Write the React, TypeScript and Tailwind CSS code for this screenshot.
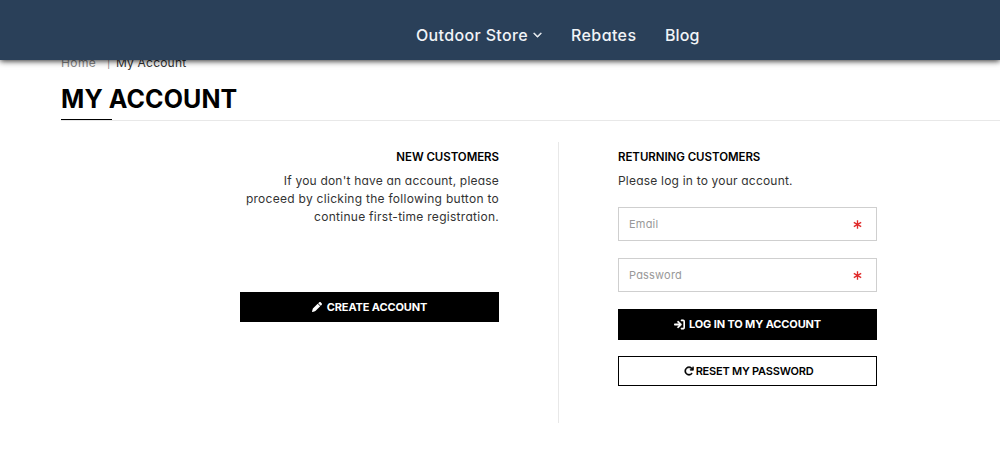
import React from 'react';
import { FaArrowRightToBracket, FaArrowRotateRight, FaChevronDown, FaPen } from 'react-icons/fa6';

interface FieldProps {
  type: string;
  placeholder: string;
}

const RequiredMark: React.FC = () => (
  <svg viewBox="0 0 10 10" className="w-[9px] h-[9px] mt-px" fill="none" stroke="#e02a2a" strokeWidth="1.5">
    <path d="M5 0.3v9.4M0.9 2.7l8.2 4.6M9.1 2.7L0.9 7.3" />
  </svg>
);

const Field: React.FC<FieldProps> = ({ type, placeholder }) => (
  <label className="flex items-center h-[34px] border border-[#cfcfcf] pl-[10px] pr-[14px]">
    <input
      type={type}
      placeholder={placeholder}
      className="flex-1 min-w-0 text-[11px] tracking-[0.2px] outline-none placeholder:text-[#999]"
    />
    <RequiredMark />
  </label>
);

const Header: React.FC = () => (
  <header className="relative z-10 h-[60px] bg-[#2a4059] shadow-[0_1px_6px_rgba(0,0,0,0.85)]">
    <nav className="flex items-center h-full pl-[416px] pt-[9px] text-base font-medium text-[#f1f4f7]">
      <a className="flex items-center w-[155px]">
        <span className="tracking-[0.35px]">Outdoor Store</span>
        <FaChevronDown className="w-[9px] h-[9px] ml-[5px]" stroke="currentColor" strokeWidth="24" />
      </a>
      <a className="w-[94px] tracking-[0.4px]">Rebates</a>
      <a className="tracking-[0.1px]">Blog</a>
    </nav>
  </header>
);

export default function App() {
  return (
    <div className="h-[462px] overflow-hidden bg-white text-black font-['Inter','Open_Sans',sans-serif] [font-feature-settings:'cv11'] whitespace-nowrap">
      <Header />
      <main className="pl-[61px]">
        <div className="flex h-[18px] -mt-[6px] text-xs leading-[18px] text-[#333]">
          <span className="w-[46px] text-[#888] tracking-[0.4px]">Home</span>
          <span className="w-[9px] text-[#888] text-[10px]">|</span>
          <span className="tracking-[0.2px]">My Account</span>
        </div>
        <div className="h-[49px] border-b border-[#e8e8e8]">
          <h1 className="w-[51px] h-[48px] pt-[13px] border-b border-black text-[25px] leading-[28px] font-bold tracking-[0.1px]">MY ACCOUNT</h1>
        </div>

        <div className="flex mt-[21px] h-[281px]">
          <section className="w-[498px] pl-[179px] pr-[59px] border-r border-[#e8e8e8] text-right">
            <h2 className="h-[29px] pt-[6px] text-[11.5px] leading-[18px] font-semibold tracking-[-0.05px]">NEW CUSTOMERS</h2>
            <p className="h-[121px] pt-px text-xs leading-[18px] text-[#333]">
              <span className="tracking-[0.2px]">If you don't have an account, please</span>
              <br />
              <span className="tracking-[0.28px]">proceed by clicking the following button to</span>
              <br />
              <span className="tracking-[0.28px]">continue first-time registration.</span>
            </p>
            <button className="flex items-center justify-center w-[259px] h-[30px] bg-black text-white text-[11px] font-bold tracking-[-0.12px]">
              <FaPen className="w-[10px] h-[10px] mr-[5px]" />
              <span>CREATE ACCOUNT</span>
            </button>
          </section>

          <section className="w-[318px] pl-[59px]">
            <h2 className="h-[29px] pt-[6px] text-[11.5px] leading-[18px] font-semibold tracking-[-0.05px]">RETURNING CUSTOMERS</h2>
            <p className="pt-px text-xs leading-[18px] text-[#333] tracking-[0.2px]">Please log in to your account.</p>
            <form className="flex flex-col gap-[17px] mt-[17px]">
              <Field type="email" placeholder="Email" />
              <Field type="password" placeholder="Password" />
              <button type="button" className="flex items-center justify-center h-[31px] bg-black text-white text-[11px] font-bold tracking-[-0.12px]">
                <FaArrowRightToBracket className="w-[11px] h-[11px] mr-[4px]" stroke="currentColor" strokeWidth="24" />
                <span>LOG IN TO MY ACCOUNT</span>
              </button>
              <button type="button" className="flex items-center justify-center h-[30px] -mt-px pl-[2px] border border-black text-[11px] font-semibold tracking-[-0.22px]">
                <FaArrowRotateRight className="w-[10px] h-[10px] mr-[2px]" stroke="currentColor" strokeWidth="20" />
                <span>RESET MY PASSWORD</span>
              </button>
            </form>
          </section>
        </div>
      </main>
    </div>
  );
}
